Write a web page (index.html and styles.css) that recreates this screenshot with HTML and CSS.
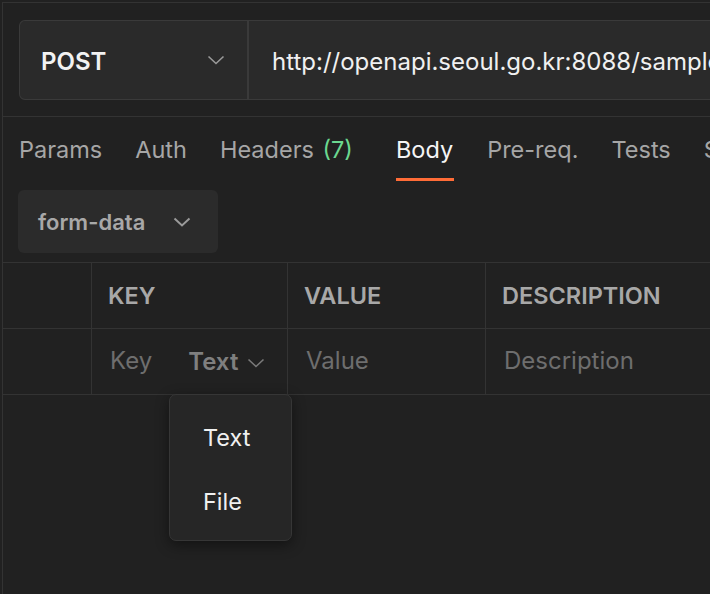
FILE: index.html
```html
<!DOCTYPE html>
<html>
<head>
<meta charset="utf-8">
<link rel="stylesheet" href="styles.css">
</head>
<body>
<div class="app">
  <div class="panel">
    <div class="urlbar">
      <div class="method">
        <span class="method-name">POST</span>
        <svg class="chev" width="18" height="10" viewBox="0 0 18 10"><path d="M1.5 1.5 L9 8.5 L16.5 1.5" fill="none" stroke="#9a9a9a" stroke-width="1.6"/></svg>
      </div>
      <div class="url">http://openapi.seoul.go.kr:8088/sample/xml/CardSubwayStatsNew/1/5/</div>
    </div>
    <div class="tabs">
      <div class="tab">Params</div>
      <div class="tab">Auth</div>
      <div class="tab">Headers <span class="count">(7)</span></div>
      <div class="tab active">Body</div>
      <div class="tab">Pre-req.</div>
      <div class="tab">Tests</div>
      <div class="tab">Settings</div>
    </div>
    <div class="bodytype">
      <div class="select">
        <span>form-data</span>
        <svg class="chev" width="18" height="10" viewBox="0 0 18 10"><path d="M1.5 1.5 L9 8.5 L16.5 1.5" fill="none" stroke="#9a9a9a" stroke-width="2"/></svg>
      </div>
    </div>
    <div class="table">
      <div class="row head">
        <div class="cell c0"></div>
        <div class="cell c1">KEY</div>
        <div class="cell c2">VALUE</div>
        <div class="cell c3">DESCRIPTION</div>
      </div>
      <div class="row">
        <div class="cell c0"></div>
        <div class="cell c1 keycell">
          <span class="ph">Key</span>
          <span class="type">Text
            <svg class="chev-s" width="18" height="10" viewBox="0 0 18 10"><path d="M1.5 1.5 L9 8.5 L16.5 1.5" fill="none" stroke="#7a7a7a" stroke-width="1.6"/></svg>
          </span>
          <div class="menu">
            <div class="menu-item">Text</div>
            <div class="menu-item">File</div>
          </div>
        </div>
        <div class="cell c2"><span class="ph">Value</span></div>
        <div class="cell c3"><span class="ph">Description</span></div>
      </div>
    </div>
  </div>
</div>
</body>
</html>
```
FILE: styles.css
```css
html, body {
  margin: 0;
  padding: 0;
  background: #212121;
  height: 100%;
  overflow: hidden;
}
body {
  font-family: Inter, "Noto Sans", sans-serif;
  color: #ebebeb;
}
.app {
  padding: 2px 0 0 2px;
  height: 100%;
  box-sizing: border-box;
}
.panel {
  border-top: 1px solid #333333;
  border-left: 1px solid #333333;
  height: 100%;
  width: 1200px;
}
.urlbar {
  display: flex;
  padding: 17px 0 16px 16px;
  border-bottom: 1px solid #333333;
}
.method {
  box-sizing: border-box;
  width: 230px;
  height: 80px;
  display: flex;
  align-items: center;
  justify-content: space-between;
  padding: 3px 22px 0 21px;
  background: #2a2a2a;
  border: 1px solid #3a3a3a;
  border-right: 2px solid #3a3a3a;
  border-radius: 6px 0 0 6px;
}
.method-name {
  font-size: 24px;
  font-weight: 600;
  color: #f2f2f2;
}
.chev { display: block; }
.method .chev { margin-top: -3px; }
.url {
  flex: 1;
  height: 80px;
  box-sizing: border-box;
  display: flex;
  align-items: center;
  padding: 3px 0 0 23px;
  background: #2a2a2a;
  border-top: 1px solid #3a3a3a;
  border-bottom: 1px solid #3a3a3a;
  font-size: 24px;
  color: #f0f0f0;
  white-space: nowrap;
}
.tabs {
  display: flex;
  gap: 33px;
  padding: 18px 0 0 16px;
}
.tab {
  font-size: 23.5px;
  line-height: 30px;
  color: #a6a6a6;
  padding-bottom: 13px;
  border-bottom: 3px solid transparent;
  white-space: nowrap;
}
.tab .count { color: #6bd890; margin-left: 2px; }
.tab:nth-child(3) { margin-right: 10px; }
.tab.active {
  color: #f5f5f5;
  border-bottom-color: #ff6c37;
  padding-right: 1px;
}
.bodytype {
  padding: 9px 0 9px 15px;
}
.select {
  box-sizing: border-box;
  width: 200px;
  height: 63px;
  display: flex;
  align-items: center;
  gap: 28px;
  padding-left: 20px;
  background: #2b2b2b;
  border-radius: 6px;
  font-size: 22px;
  font-weight: 600;
  color: #a8a8a8;
}
.table {
  border-top: 1px solid #333333;
}
.row {
  display: flex;
  height: 66px;
  border-bottom: 1px solid #333333;
  box-sizing: border-box;
}
.cell {
  box-sizing: border-box;
  display: flex;
  align-items: center;
  border-right: 1px solid #333333;
  padding-left: 16px;
  font-size: 23.5px;
}
.c0 { width: 89px; padding: 0; }
.c1 { width: 196px; position: relative; }
.c2 { width: 198px; }
.c3 { width: 600px; border-right: none; }
.head .cell {
  font-weight: 600;
  color: #a8a8a8;
}
.ph {
  color: #6e6e6e;
  padding: 0 0 2px 2px;
  font-size: 24px;
}
.keycell {
  justify-content: flex-start;
}
.type {
  margin-left: 36px;
  display: flex;
  align-items: center;
  gap: 9px;
  font-weight: 600;
  font-size: 24px;
  color: #7f7f7f;
}
.chev-s { display: block; margin-top: 3px; }
.menu {
  position: absolute;
  left: 77px;
  top: 65px;
  width: 123px;
  height: 147px;
  box-sizing: border-box;
  background: #262626;
  border: 1px solid #363636;
  border-radius: 7px;
  box-shadow: 0 4px 14px rgba(0,0,0,0.45);
  padding-top: 21px;
  z-index: 2;
}
.menu-item {
  height: 64px;
  line-height: 44px;
  padding-left: 33px;
  font-size: 23.5px;
  color: #f0f0f0;
}
```
